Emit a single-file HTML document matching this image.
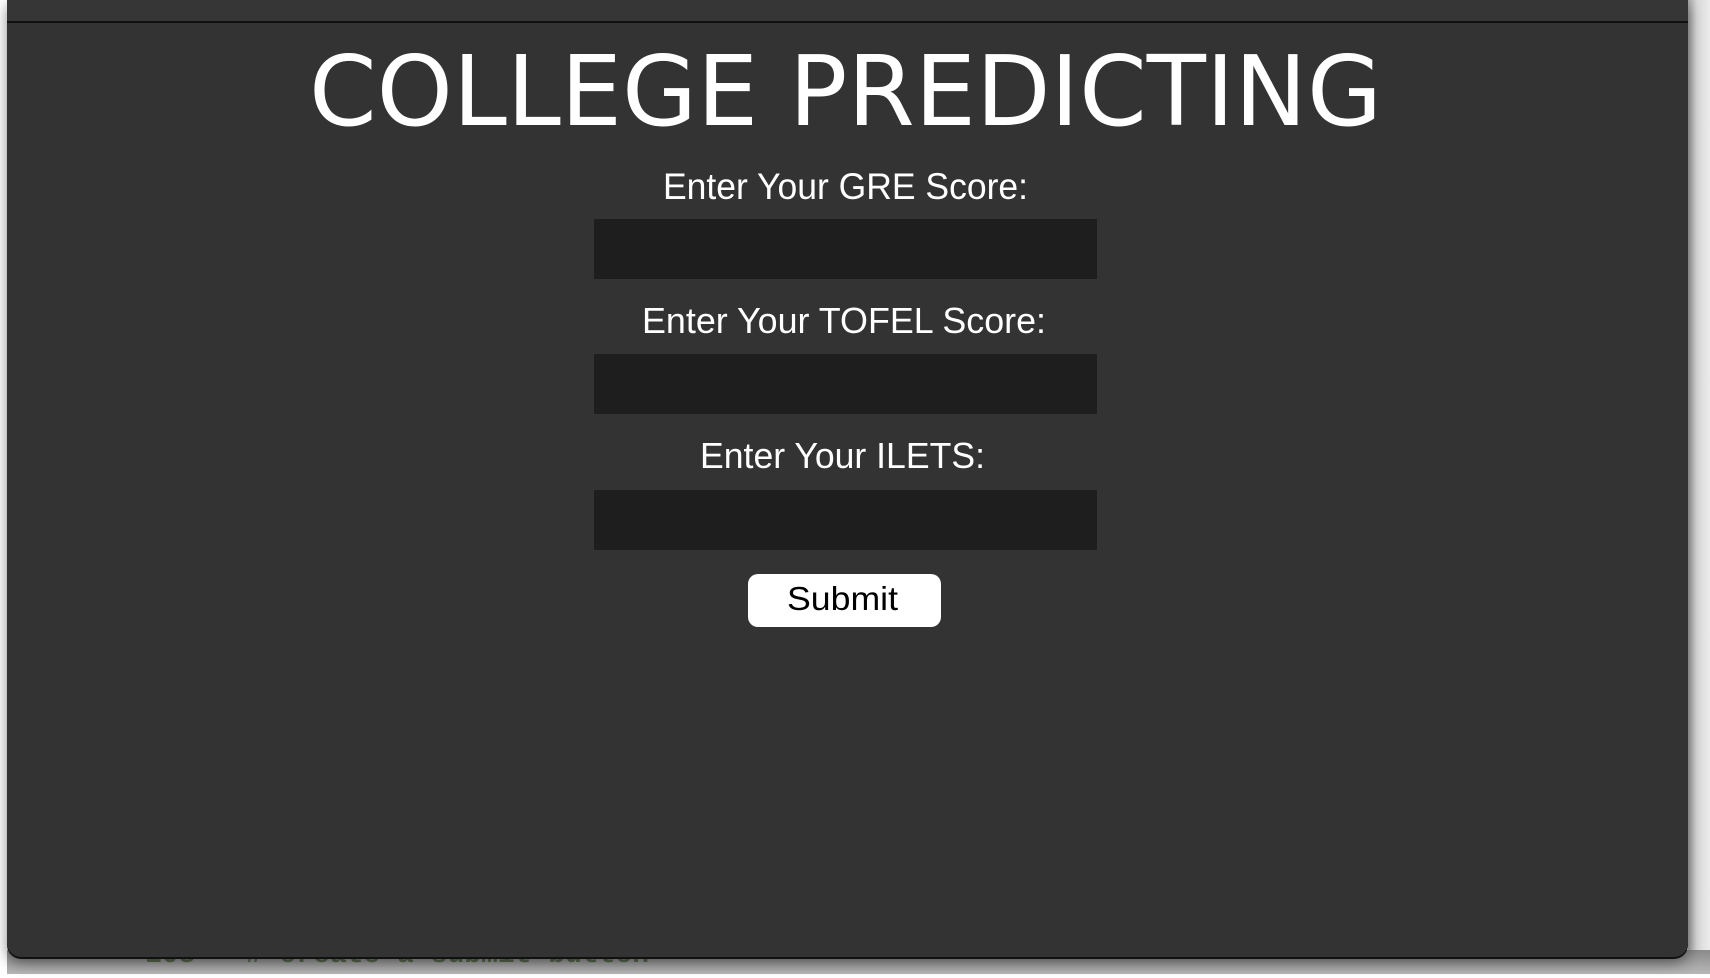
<!DOCTYPE html>
<html><head><meta charset="utf-8"><style>
html,body{margin:0;padding:0;width:1710px;height:978px;overflow:hidden;background:#fff;}
.right{position:absolute;left:1688px;top:0;width:22px;height:974px;background:linear-gradient(90deg,#a8a8a8,#d8d8d8 40%,#ececec);}
.bottom{position:absolute;left:7px;top:950px;width:1703px;height:24px;background:linear-gradient(180deg,#8a8a8a,#b8b8b8);}
.win{position:absolute;left:7px;top:0;width:1681px;height:957px;background:#333;border-radius:0 0 14px 14px;box-shadow:0 2px 0 #111,0 6px 14px rgba(0,0,0,.45);}
.tb{position:absolute;left:7px;top:0;width:1681px;height:21px;background:#363636;border-bottom:2px solid #111;}
.box{position:absolute;left:594px;width:503px;background:#1e1e1e;}
svg{position:absolute;left:0;top:0;}
.btn{position:absolute;left:748px;top:574px;width:193px;height:53px;background:#fff;border-radius:10px;}
.code{position:absolute;left:145px;top:940px;font:bold 28px "Liberation Mono",monospace;color:#2a4a1a;opacity:.6;}
</style></head><body>
<div class="right"></div>
<div class="bottom"></div>
<div class="code">108&nbsp;&nbsp;&nbsp;# create a submit button</div>
<div class="win"></div>
<div class="tb"></div>
<div class="box" style="top:219px;height:60px"></div>
<div class="box" style="top:354px;height:60px"></div>
<div class="box" style="top:490px;height:60px"></div>
<div class="btn"></div>
<svg width="1710" height="978">
<g font-family="'DejaVu Sans','Liberation Sans',sans-serif" fill="#fff">
<text x="309" y="125" font-size="97" textLength="1073" lengthAdjust="spacingAndGlyphs">COLLEGE PREDICTING</text>
</g>
<g font-family="'Liberation Sans',sans-serif" fill="#fff">
<text x="663" y="199" font-size="37" textLength="365" lengthAdjust="spacingAndGlyphs">Enter Your GRE Score:</text>
<text x="642" y="333" font-size="36" textLength="404" lengthAdjust="spacingAndGlyphs">Enter Your TOFEL Score:</text>
<text x="700" y="468" font-size="36" textLength="285" lengthAdjust="spacingAndGlyphs">Enter Your ILETS:</text>
<text x="787" y="610" font-size="33" fill="#000" textLength="111" lengthAdjust="spacingAndGlyphs">Submit</text>
</g>
</svg>
</body></html>
